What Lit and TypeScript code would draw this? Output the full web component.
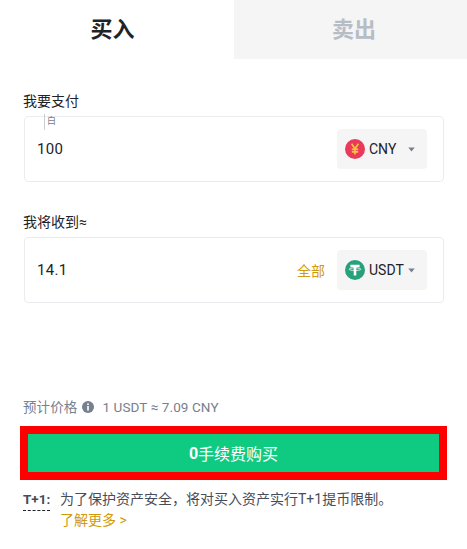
import { LitElement, html, css } from "lit";
import { customElement } from "lit/decorators.js";

const caret = html`<svg class="caret" viewBox="0 0 7 5" width="7" height="5"><path d="M0.3 0.5H6.7L3.5 4.6Z" fill="#76808f"/></svg>`;
const cny = html`<svg class="coin" viewBox="0 0 20 20" width="20" height="20"><circle cx="10" cy="10" r="10" fill="#ea3a5a"/><path d="M6.6 4.8 10 9.8 13.4 4.8M6.8 10.4H13.2M6.8 12.9H13.2M10 9.8V15.4" fill="none" stroke="#f8c33c" stroke-width="1.6"/></svg>`;
const usdt = html`<svg class="coin" viewBox="0 0 20 20" width="20" height="20"><circle cx="10" cy="10" r="10" fill="#26a17b"/><path d="M5.4 4.8H14.6V7.2H11.3V15.4H8.7V7.2H5.4Z" fill="#fff"/><ellipse cx="10" cy="9.2" rx="5.9" ry="1.3" fill="none" stroke="#fff" stroke-width="0.8"/></svg>`;

@customElement("app-root")
export class AppRoot extends LitElement {
  static styles = css`
    :host { display: block; width: 467px; height: 549px; background: #fff; overflow: hidden;
      font-family: "Roboto", "Noto Sans CJK SC", sans-serif; color: #1e2329; }
    .tabs { display: grid; grid-template-columns: 234px 233px; height: 59px; }
    .tab { display: flex; align-items: center; justify-content: center; font-size: 22px; font-weight: 700; padding-bottom: 6px; box-sizing: border-box; }
    .tab.on { padding-right: 9px; }
    .tab.off { background: #f5f5f5; color: #b7bdc6; padding-left: 7px; }
    .main { padding: 0 23px 0 24px; }
    .label { font-size: 14px; line-height: 18px; color: #1e2329; margin-left: -1px; }
    .first { margin-top: 33px; }
    .second { margin-top: 31px; }
    .field { position: relative; box-sizing: border-box; height: 66px; margin-top: 6px; border: 1px solid #eaecef; border-radius: 4px;
      display: flex; align-items: center; padding: 0 16px 0 12px; }
    .value { flex: 1; font-size: 15px; color: #1e2329; letter-spacing: 0.3px; }
    .ph { position: absolute; left: 19px; top: -3px; height: 16px; border-left: 1px solid #c9ced6; padding-left: 2px; font-size: 9px; line-height: 15px; color: #76808f; }
    .all { font-size: 14px; color: #d09a0c; margin-right: 12px; }
    .sel { box-sizing: border-box; width: 90px; height: 40px; background: #f5f5f5; border-radius: 4px; display: flex; align-items: center; padding: 0 12px 0 8px; font-size: 14px; color: #1e2329; }
    .coin { flex: none; margin-right: 4px; }
    .caret { margin-left: auto; }
    .price { margin-top: 95px; font-size: 13.5px; line-height: 18px; color: #76808f; display: flex; align-items: center; margin-left: -1px; letter-spacing: 0.1px; }
    .info { margin: 0 8px 0 5px; }
    .buy { box-sizing: border-box; display: flex; align-items: center; justify-content: center; width: 427px; height: 54px; margin: 10px 0 0 -4px; border: 8px solid #f00; background: #0ecb81; color: #fff; font-size: 16px; }
    .buy b { font-weight: 700; }
    .note { margin-top: 9px; display: flex; font-size: 14px; line-height: 21px; color: #474d57; margin-left: -1px; }
    .t1 { width: 37px; flex: none; font-weight: 700; font-size: 13.5px; }
    .t1 span { display: inline-block; height: 22px; border-bottom: 1px dashed #1e2329; box-sizing: border-box; }
    .more { color: #d09a0c; display: block; }
  `;

  render() {
    return html`
      <div class="tabs"><div class="tab on">买入</div><div class="tab off">卖出</div></div>
      <div class="main">
        <div class="label first">我要支付</div>
        <div class="field">
          <div class="ph">白</div>
          <div class="value">100</div>
          <div class="sel">${cny}CNY${caret}</div>
        </div>
        <div class="label second">我将收到≈</div>
        <div class="field">
          <div class="value">14.1</div>
          <div class="all">全部</div>
          <div class="sel">${usdt}USDT${caret}</div>
        </div>
        <div class="price">预计价格
          <svg class="info" viewBox="0 0 12 12" width="12" height="12"><circle cx="6" cy="6" r="6" fill="#76808f"/><rect x="5.2" y="2.4" width="1.6" height="1.6" fill="#fff"/><rect x="5.2" y="5" width="1.6" height="4.6" fill="#fff"/></svg>
          1 USDT ≈ 7.09 CNY</div>
        <div class="buy"><b>0</b>手续费购买</div>
        <div class="note">
          <div class="t1"><span>T+1:</span></div>
          <div>为了保护资产安全，将对买入资产实行T+1提币限制。<a class="more">了解更多 &gt;</a></div>
        </div>
      </div>
    `;
  }
}
